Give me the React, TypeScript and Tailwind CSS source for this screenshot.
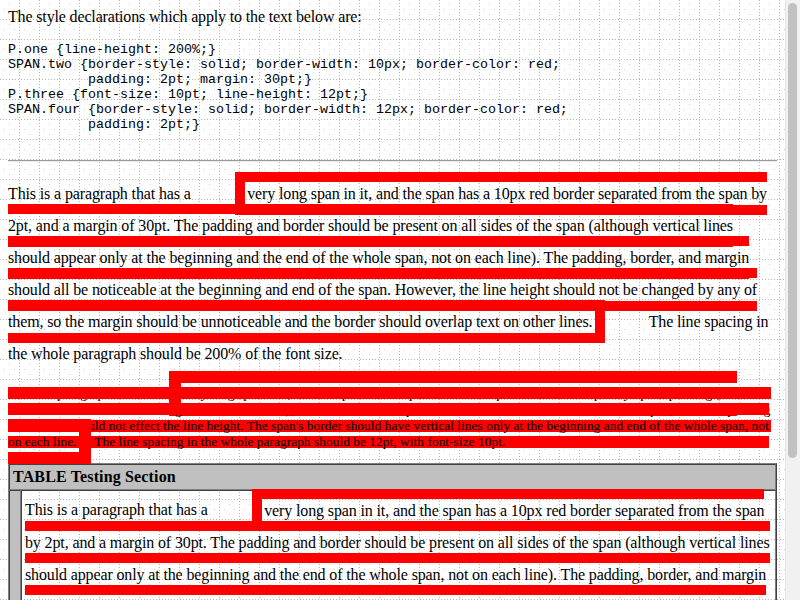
import React from "react";

const GRID =
  "bg-[image:conic-gradient(from_0deg_at_1px_1px,transparent_270deg,#b4b4b4_270deg),conic-gradient(from_0deg_at_1px_1px,transparent_270deg,#b4b4b4_270deg),conic-gradient(from_0deg_at_1px_1px,transparent_270deg,#d2d2d2_270deg),conic-gradient(from_0deg_at_1px_1px,transparent_270deg,#d2d2d2_270deg),conic-gradient(from_0deg_at_1px_1px,transparent_270deg,#d2d2d2_270deg),conic-gradient(from_0deg_at_1px_1px,transparent_270deg,#d2d2d2_270deg)] bg-[size:20px_3px,3px_20px,20px_20px,20px_20px,20px_20px,20px_20px] bg-[position:19px_0px,0px_19px,9px_4px,4px_9px,14px_9px,9px_14px]";

const PRE_TEXT = `P.one {line-height: 200%;}
SPAN.two {border-style: solid; border-width: 10px; border-color: red;
          padding: 2pt; margin: 30pt;}
P.three {font-size: 10pt; line-height: 12pt;}
SPAN.four {border-style: solid; border-width: 12px; border-color: red;
          padding: 2pt;}
 `;

function ParaOne({ first }: { first?: boolean }) {
  return (
    <p
      className={
        first
          ? "mt-0 mb-[16px] leading-[200%] tracking-[-0.13px]"
          : "my-[16px] leading-[200%] tracking-[-0.13px]"
      }
    >
      This is a paragraph that has a{" "}
      <span className="border-[10px] border-solid border-[red] p-[2pt] m-[30pt]">
        very long span in it, and the span has a 10px red border separated from the span by 2pt,
        and a margin of 30pt. The padding and border should be present on all sides of the span
        (although vertical lines should appear only at the beginning and the end of the whole span,
        not on each line). The padding, border, and margin should all be noticeable at the
        beginning and end of the span. However, the line height should not be changed by any of
        them, so the margin should be unnoticeable and the border should overlap text on other
        lines.
      </span>{" "}
      The line spacing in the whole paragraph should be 200% of the font size.
    </p>
  );
}

function ParaThree() {
  return (
    <p className="my-[10pt] text-[10pt] leading-[12pt] tracking-[0.06px]">
      This is a paragraph that has a{" "}
      <span className="border-[12px] border-solid border-[red] p-[2pt]">
        very long span in it, and the span has a 12px red border separated from the span by 2pt of
        padding (the difference between the line-height and the font-size), which should overlap
        with the lines of text above and below the span, since the padding and border should not
        effect the line height. The span's border should have vertical lines only at the beginning
        and end of the whole span, not on each line.
      </span>{" "}
      The line spacing in the whole paragraph should be 12pt, with font-size 10pt.
    </p>
  );
}

export default function App() {
  return (
    <div className="flex h-[600px] w-[800px] overflow-hidden bg-white text-black font-['Liberation_Serif',serif] text-[16px] leading-[normal]">
      <div className={`w-[785px] shrink-0 h-full overflow-hidden p-[8px] ${GRID}`}>
        <p className="mt-0 mb-[16px] tracking-[-0.15px]">
          The style declarations which apply to the text below are:
        </p>
        <pre className="my-[13px] font-['Liberation_Mono',monospace] text-[13.33px] leading-[15px] tracking-normal whitespace-pre">
          {PRE_TEXT}
        </pre>
        <div className="my-[8px] h-0 border-t border-b border-t-[#9a9a9a] border-b-[#eeeeee]" />
        <ParaOne />
        <ParaThree />
        <div className="grid grid-cols-[auto_1fr] border border-t-[#808080] border-l-[#808080] border-r-[#404040] border-b-[#404040]">
          <div className="col-span-2 bg-[#c0c0c0] p-[3px] border border-t-[#404040] border-l-[#404040] border-r-[#808080] border-b-[#808080] font-bold tracking-[0.15px]">
            TABLE Testing Section
          </div>
          <div className="bg-[#c0c0c0] p-[3px] border border-t-[#404040] border-l-[#404040] border-r-[#808080] border-b-[#808080]">
            {"\u00a0"}
          </div>
          <div className="min-w-0 p-[3px] border border-t-[#404040] border-l-[#404040] border-r-[#808080] border-b-[#808080]">
            <ParaOne first />
            <ParaThree />
          </div>
        </div>
      </div>
      <div className="w-[15px] shrink-0 h-full bg-[#f1f1f1] border-l border-l-[#e6e6e6]">
        <div className="mt-[3px] ml-[2px] w-[9px] h-[455px] rounded-full bg-[#c1c1c1]" />
      </div>
    </div>
  );
}
